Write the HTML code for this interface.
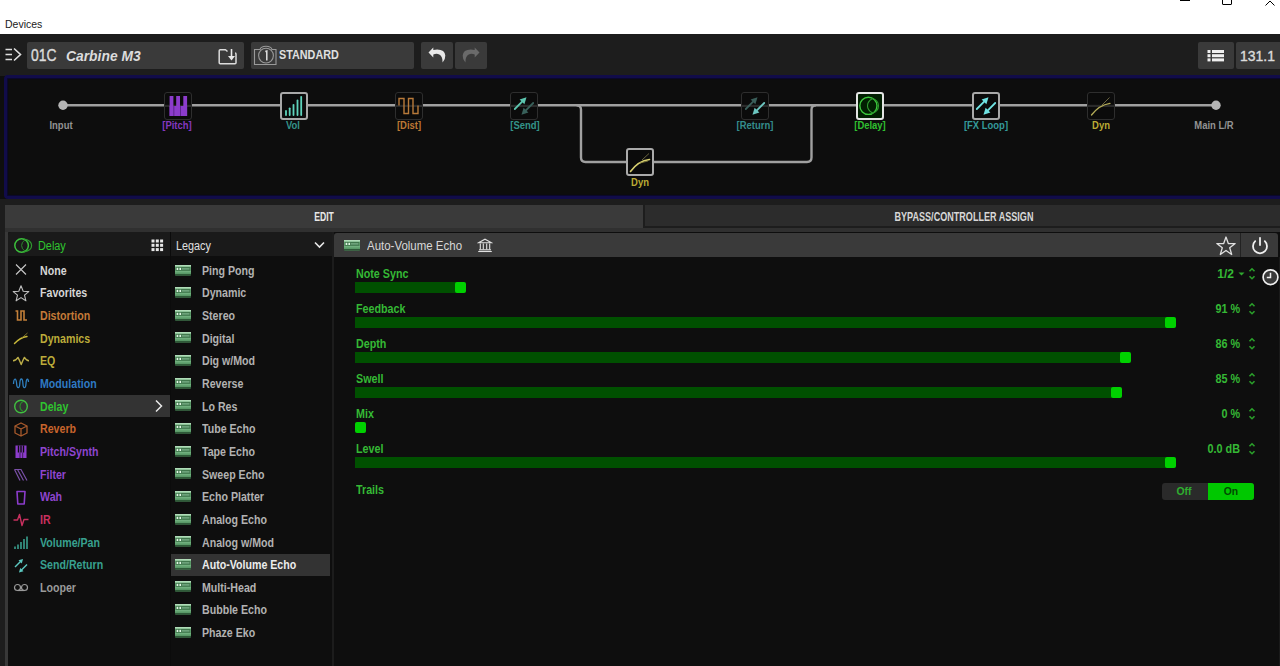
<!DOCTYPE html><html><head><meta charset="utf-8"><style>
html,body{margin:0;padding:0;}
body{width:1280px;height:666px;overflow:hidden;position:relative;background:#0e0e0e;font-family:"Liberation Sans",sans-serif;}
</style></head><body>
<div style="position:absolute;left:0px;top:0px;width:1280px;height:34px;background:#ffffff;"></div>
<div style="position:absolute;left:5px;top:19.11px;font-size:10.5px;line-height:10.5px;font-weight:normal;font-style:normal;color:#1a1a1a;white-space:nowrap;transform:scaleX(1.0);transform-origin:0 0;">Devices</div>
<div style="position:absolute;left:1180px;top:0px;width:10px;height:1px;background:#000;"></div>
<div style="position:absolute;left:1222px;top:-6px;width:8px;height:9px;border:1px solid #000;border-radius:1px;"></div>
<svg style="position:absolute;left:1262px;top:0px;" width="16" height="7" viewBox="0 0 16 7"><path d="M3.5 5.5 L8 1 L12.5 5.5" stroke="#000" stroke-width="1" fill="none"/></svg>
<div style="position:absolute;left:0px;top:34px;width:1280px;height:42px;background:#1d1d1d;"></div>
<svg style="position:absolute;left:4px;top:47px;" width="20" height="15" viewBox="0 0 20 15"><g stroke="#dedede" stroke-width="1.6" fill="none"><path d="M1.5 2.5H8M1.5 7.5H8M1.5 12.5H8"/><path d="M10 1.5L16.5 7.5L10 13.5"/></g></svg>
<div style="position:absolute;left:27px;top:42px;width:217px;height:27px;background:#3a3a3a;border-radius:2px;"></div>
<div style="position:absolute;left:30.5px;top:46.83px;font-size:16.5px;line-height:16.5px;font-weight:normal;font-style:normal;color:#dcdcdc;white-space:nowrap;transform:scaleX(0.84);transform-origin:0 0;-webkit-text-stroke:0.4px #dcdcdc;">01C</div>
<div style="position:absolute;left:66px;top:47.68px;font-size:15.5px;line-height:15.5px;font-weight:bold;font-style:italic;color:#dcdcdc;white-space:nowrap;transform:scaleX(0.894);transform-origin:0 0;">Carbine M3</div>
<div style="position:absolute;left:251px;top:42px;width:163px;height:27px;background:#3a3a3a;border-radius:2px;"></div>
<div style="position:absolute;left:278.5px;top:49.34px;font-size:12px;line-height:12px;font-weight:bold;font-style:normal;color:#e0e0e0;white-space:nowrap;transform:scaleX(0.9);transform-origin:0 0;">STANDARD</div>
<div style="position:absolute;left:421px;top:42px;width:32px;height:27px;background:#3a3a3a;border-radius:2px;"></div>
<div style="position:absolute;left:455px;top:42px;width:32px;height:27px;background:#3a3a3a;border-radius:2px;"></div>
<div style="position:absolute;left:1198px;top:42px;width:36px;height:27px;background:#3a3a3a;border-radius:2px;"></div>
<div style="position:absolute;left:1236px;top:42px;width:50px;height:27px;background:#3a3a3a;border-radius:2px;"></div>
<div style="position:absolute;left:1240px;top:47.88px;font-size:15.5px;line-height:15.5px;font-weight:normal;font-style:normal;color:#dcdcdc;white-space:nowrap;transform:scaleX(0.9);transform-origin:0 0;-webkit-text-stroke:0.4px #dcdcdc;">131.1</div>
<div style="position:absolute;left:3.5px;top:75px;width:1290px;height:124px;background:#0d0d0d;box-sizing:border-box;border:3px solid #110c4a;border-right:none;border-radius:4px 0 0 4px;box-shadow:inset 0 0 1px 1px #0a0830;"></div>
<div style="position:absolute;left:0px;top:199px;width:1280px;height:467px;background:#1d1d1d;"></div>
<div style="position:absolute;left:5px;top:205px;width:3px;height:461px;background:#383838;"></div>
<div style="position:absolute;left:5px;top:205px;width:638px;height:23px;background:#3a3a3a;"></div>
<div style="position:absolute;left:645px;top:205px;width:640px;height:21px;background:#2c2c2c;"></div>
<div style="position:absolute;left:5px;top:228px;width:1280px;height:4px;background:#303030;"></div>
<div style="position:absolute;left:-176px;width:1000px;text-align:center;top:211.14px;font-size:12px;line-height:12px;font-weight:bold;font-style:normal;color:#e8e8e8;white-space:nowrap;transform:scaleX(0.72);transform-origin:50% 0;">EDIT</div>
<div style="position:absolute;left:464px;width:1000px;text-align:center;top:210.54px;font-size:12px;line-height:12px;font-weight:bold;font-style:normal;color:#d8d8d8;white-space:nowrap;transform:scaleX(0.755);transform-origin:50% 0;">BYPASS/CONTROLLER ASSIGN</div>
<div style="position:absolute;left:8px;top:232px;width:1272px;height:434px;background:#0e0e0e;border-radius:3px 0 0 0;"></div>
<div style="position:absolute;left:170px;top:232px;width:1px;height:434px;background:#0b0b0b;"></div>
<div style="position:absolute;left:332px;top:232px;width:1.5px;height:434px;background:#1c1c1c;"></div>
<div style="position:absolute;left:8px;top:232px;width:162px;height:24px;background:#1a1a1a;border-radius:3px 0 0 0;"></div>
<div style="position:absolute;left:171px;top:232px;width:161px;height:24px;background:#1a1a1a;"></div>
<div style="position:absolute;left:334px;top:233px;width:944px;height:24px;background:#3a3a3a;border-radius:3px 3px 0 0;"></div>
<div style="position:absolute;left:1240px;top:233px;width:1px;height:24px;background:#222;"></div>
<div style="position:absolute;left:1279px;top:257px;width:1px;height:409px;background:#1a1a1a;"></div>
<div style="position:absolute;left:38.4px;top:239.54px;font-size:12px;line-height:12px;font-weight:normal;font-style:normal;color:#2fc42f;white-space:nowrap;transform:scaleX(0.906);transform-origin:0 0;">Delay</div>
<div style="position:absolute;left:175.6px;top:239.64px;font-size:12px;line-height:12px;font-weight:normal;font-style:normal;color:#e0e0e0;white-space:nowrap;transform:scaleX(0.9);transform-origin:0 0;">Legacy</div>
<div style="position:absolute;left:367px;top:239.84px;font-size:12px;line-height:12px;font-weight:normal;font-style:normal;color:#d8d8d8;white-space:nowrap;transform:scaleX(0.956);transform-origin:0 0;">Auto-Volume Echo</div>
<div style="position:absolute;left:9px;top:395px;width:161px;height:22px;background:#333333;"></div>
<div style="position:absolute;left:171px;top:553.5px;width:159px;height:22.5px;background:#333333;"></div>
<div style="position:absolute;left:40px;top:264.84px;font-size:12px;line-height:12px;font-weight:bold;font-style:normal;color:#d6d6d6;white-space:nowrap;transform:scaleX(0.885);transform-origin:0 0;">None</div>
<div style="position:absolute;left:40px;top:287.48px;font-size:12px;line-height:12px;font-weight:bold;font-style:normal;color:#d6d6d6;white-space:nowrap;transform:scaleX(0.885);transform-origin:0 0;">Favorites</div>
<div style="position:absolute;left:40px;top:310.12px;font-size:12px;line-height:12px;font-weight:bold;font-style:normal;color:#c47a38;white-space:nowrap;transform:scaleX(0.885);transform-origin:0 0;">Distortion</div>
<div style="position:absolute;left:40px;top:332.76px;font-size:12px;line-height:12px;font-weight:bold;font-style:normal;color:#bcac3a;white-space:nowrap;transform:scaleX(0.885);transform-origin:0 0;">Dynamics</div>
<div style="position:absolute;left:40px;top:355.40px;font-size:12px;line-height:12px;font-weight:bold;font-style:normal;color:#bcac3a;white-space:nowrap;transform:scaleX(0.885);transform-origin:0 0;">EQ</div>
<div style="position:absolute;left:40px;top:378.04px;font-size:12px;line-height:12px;font-weight:bold;font-style:normal;color:#2f7ac4;white-space:nowrap;transform:scaleX(0.885);transform-origin:0 0;">Modulation</div>
<div style="position:absolute;left:40px;top:400.68px;font-size:12px;line-height:12px;font-weight:bold;font-style:normal;color:#2fc42f;white-space:nowrap;transform:scaleX(0.885);transform-origin:0 0;">Delay</div>
<div style="position:absolute;left:40px;top:423.32px;font-size:12px;line-height:12px;font-weight:bold;font-style:normal;color:#c8642c;white-space:nowrap;transform:scaleX(0.885);transform-origin:0 0;">Reverb</div>
<div style="position:absolute;left:40px;top:445.96px;font-size:12px;line-height:12px;font-weight:bold;font-style:normal;color:#8f45d0;white-space:nowrap;transform:scaleX(0.885);transform-origin:0 0;">Pitch/Synth</div>
<div style="position:absolute;left:40px;top:468.60px;font-size:12px;line-height:12px;font-weight:bold;font-style:normal;color:#8f45d0;white-space:nowrap;transform:scaleX(0.885);transform-origin:0 0;">Filter</div>
<div style="position:absolute;left:40px;top:491.24px;font-size:12px;line-height:12px;font-weight:bold;font-style:normal;color:#8f45d0;white-space:nowrap;transform:scaleX(0.885);transform-origin:0 0;">Wah</div>
<div style="position:absolute;left:40px;top:513.88px;font-size:12px;line-height:12px;font-weight:bold;font-style:normal;color:#c8305f;white-space:nowrap;transform:scaleX(0.885);transform-origin:0 0;">IR</div>
<div style="position:absolute;left:40px;top:536.52px;font-size:12px;line-height:12px;font-weight:bold;font-style:normal;color:#38a08f;white-space:nowrap;transform:scaleX(0.885);transform-origin:0 0;">Volume/Pan</div>
<div style="position:absolute;left:40px;top:559.16px;font-size:12px;line-height:12px;font-weight:bold;font-style:normal;color:#38a08f;white-space:nowrap;transform:scaleX(0.885);transform-origin:0 0;">Send/Return</div>
<div style="position:absolute;left:40px;top:581.80px;font-size:12px;line-height:12px;font-weight:bold;font-style:normal;color:#9a9a9a;white-space:nowrap;transform:scaleX(0.885);transform-origin:0 0;">Looper</div>
<div style="position:absolute;left:201.6px;top:264.84px;font-size:12px;line-height:12px;font-weight:bold;font-style:normal;color:#b2b2b2;white-space:nowrap;transform:scaleX(0.885);transform-origin:0 0;">Ping Pong</div>
<div style="position:absolute;left:201.6px;top:287.48px;font-size:12px;line-height:12px;font-weight:bold;font-style:normal;color:#b2b2b2;white-space:nowrap;transform:scaleX(0.885);transform-origin:0 0;">Dynamic</div>
<div style="position:absolute;left:201.6px;top:310.12px;font-size:12px;line-height:12px;font-weight:bold;font-style:normal;color:#b2b2b2;white-space:nowrap;transform:scaleX(0.885);transform-origin:0 0;">Stereo</div>
<div style="position:absolute;left:201.6px;top:332.76px;font-size:12px;line-height:12px;font-weight:bold;font-style:normal;color:#b2b2b2;white-space:nowrap;transform:scaleX(0.885);transform-origin:0 0;">Digital</div>
<div style="position:absolute;left:201.6px;top:355.40px;font-size:12px;line-height:12px;font-weight:bold;font-style:normal;color:#b2b2b2;white-space:nowrap;transform:scaleX(0.885);transform-origin:0 0;">Dig w/Mod</div>
<div style="position:absolute;left:201.6px;top:378.04px;font-size:12px;line-height:12px;font-weight:bold;font-style:normal;color:#b2b2b2;white-space:nowrap;transform:scaleX(0.885);transform-origin:0 0;">Reverse</div>
<div style="position:absolute;left:201.6px;top:400.68px;font-size:12px;line-height:12px;font-weight:bold;font-style:normal;color:#b2b2b2;white-space:nowrap;transform:scaleX(0.885);transform-origin:0 0;">Lo Res</div>
<div style="position:absolute;left:201.6px;top:423.32px;font-size:12px;line-height:12px;font-weight:bold;font-style:normal;color:#b2b2b2;white-space:nowrap;transform:scaleX(0.885);transform-origin:0 0;">Tube Echo</div>
<div style="position:absolute;left:201.6px;top:445.96px;font-size:12px;line-height:12px;font-weight:bold;font-style:normal;color:#b2b2b2;white-space:nowrap;transform:scaleX(0.885);transform-origin:0 0;">Tape Echo</div>
<div style="position:absolute;left:201.6px;top:468.60px;font-size:12px;line-height:12px;font-weight:bold;font-style:normal;color:#b2b2b2;white-space:nowrap;transform:scaleX(0.885);transform-origin:0 0;">Sweep Echo</div>
<div style="position:absolute;left:201.6px;top:491.24px;font-size:12px;line-height:12px;font-weight:bold;font-style:normal;color:#b2b2b2;white-space:nowrap;transform:scaleX(0.885);transform-origin:0 0;">Echo Platter</div>
<div style="position:absolute;left:201.6px;top:513.88px;font-size:12px;line-height:12px;font-weight:bold;font-style:normal;color:#b2b2b2;white-space:nowrap;transform:scaleX(0.885);transform-origin:0 0;">Analog Echo</div>
<div style="position:absolute;left:201.6px;top:536.52px;font-size:12px;line-height:12px;font-weight:bold;font-style:normal;color:#b2b2b2;white-space:nowrap;transform:scaleX(0.885);transform-origin:0 0;">Analog w/Mod</div>
<div style="position:absolute;left:201.6px;top:559.16px;font-size:12px;line-height:12px;font-weight:bold;font-style:normal;color:#ececec;white-space:nowrap;transform:scaleX(0.885);transform-origin:0 0;">Auto-Volume Echo</div>
<div style="position:absolute;left:201.6px;top:581.80px;font-size:12px;line-height:12px;font-weight:bold;font-style:normal;color:#b2b2b2;white-space:nowrap;transform:scaleX(0.885);transform-origin:0 0;">Multi-Head</div>
<div style="position:absolute;left:201.6px;top:604.44px;font-size:12px;line-height:12px;font-weight:bold;font-style:normal;color:#b2b2b2;white-space:nowrap;transform:scaleX(0.885);transform-origin:0 0;">Bubble Echo</div>
<div style="position:absolute;left:201.6px;top:627.08px;font-size:12px;line-height:12px;font-weight:bold;font-style:normal;color:#b2b2b2;white-space:nowrap;transform:scaleX(0.885);transform-origin:0 0;">Phaze Eko</div>
<div style="position:absolute;left:355.5px;top:267.84px;font-size:12px;line-height:12px;font-weight:bold;font-style:normal;color:#35b935;white-space:nowrap;transform:scaleX(0.894);transform-origin:0 0;">Note Sync</div>
<div style="position:absolute;left:355px;top:282px;width:105px;height:11px;background:#005000;"></div>
<div style="position:absolute;left:455px;top:282px;width:11px;height:11px;background:#00d000;border-radius:2px;"></div>
<div style="position:absolute;left:234px;width:1000px;text-align:right;top:267.84px;font-size:12px;line-height:12px;font-weight:bold;font-style:normal;color:#35b935;white-space:nowrap;transform:scaleX(1.0);transform-origin:100% 0;">1/2</div>
<div style="position:absolute;left:355.5px;top:302.84px;font-size:12px;line-height:12px;font-weight:bold;font-style:normal;color:#35b935;white-space:nowrap;transform:scaleX(0.894);transform-origin:0 0;">Feedback</div>
<div style="position:absolute;left:355px;top:317px;width:815px;height:11px;background:#005000;"></div>
<div style="position:absolute;left:1165px;top:317px;width:11px;height:11px;background:#00d000;border-radius:2px;"></div>
<div style="position:absolute;left:240px;width:1000px;text-align:right;top:302.84px;font-size:12px;line-height:12px;font-weight:bold;font-style:normal;color:#35b935;white-space:nowrap;transform:scaleX(0.9);transform-origin:100% 0;">91 %</div>
<div style="position:absolute;left:355.5px;top:337.84px;font-size:12px;line-height:12px;font-weight:bold;font-style:normal;color:#35b935;white-space:nowrap;transform:scaleX(0.894);transform-origin:0 0;">Depth</div>
<div style="position:absolute;left:355px;top:352px;width:770px;height:11px;background:#005000;"></div>
<div style="position:absolute;left:1120px;top:352px;width:11px;height:11px;background:#00d000;border-radius:2px;"></div>
<div style="position:absolute;left:240px;width:1000px;text-align:right;top:337.84px;font-size:12px;line-height:12px;font-weight:bold;font-style:normal;color:#35b935;white-space:nowrap;transform:scaleX(0.9);transform-origin:100% 0;">86 %</div>
<div style="position:absolute;left:355.5px;top:372.84px;font-size:12px;line-height:12px;font-weight:bold;font-style:normal;color:#35b935;white-space:nowrap;transform:scaleX(0.894);transform-origin:0 0;">Swell</div>
<div style="position:absolute;left:355px;top:387px;width:761px;height:11px;background:#005000;"></div>
<div style="position:absolute;left:1111px;top:387px;width:11px;height:11px;background:#00d000;border-radius:2px;"></div>
<div style="position:absolute;left:240px;width:1000px;text-align:right;top:372.84px;font-size:12px;line-height:12px;font-weight:bold;font-style:normal;color:#35b935;white-space:nowrap;transform:scaleX(0.9);transform-origin:100% 0;">85 %</div>
<div style="position:absolute;left:355.5px;top:407.84px;font-size:12px;line-height:12px;font-weight:bold;font-style:normal;color:#35b935;white-space:nowrap;transform:scaleX(0.894);transform-origin:0 0;">Mix</div>
<div style="position:absolute;left:355px;top:422px;width:11px;height:11px;background:#00d000;border-radius:2px;"></div>
<div style="position:absolute;left:240px;width:1000px;text-align:right;top:407.84px;font-size:12px;line-height:12px;font-weight:bold;font-style:normal;color:#35b935;white-space:nowrap;transform:scaleX(0.9);transform-origin:100% 0;">0 %</div>
<div style="position:absolute;left:355.5px;top:442.84px;font-size:12px;line-height:12px;font-weight:bold;font-style:normal;color:#35b935;white-space:nowrap;transform:scaleX(0.894);transform-origin:0 0;">Level</div>
<div style="position:absolute;left:355px;top:457px;width:815px;height:11px;background:#005000;"></div>
<div style="position:absolute;left:1165px;top:457px;width:11px;height:11px;background:#00d000;border-radius:2px;"></div>
<div style="position:absolute;left:240px;width:1000px;text-align:right;top:442.84px;font-size:12px;line-height:12px;font-weight:bold;font-style:normal;color:#35b935;white-space:nowrap;transform:scaleX(0.9);transform-origin:100% 0;">0.0 dB</div>
<div style="position:absolute;left:355.5px;top:484.24px;font-size:12px;line-height:12px;font-weight:bold;font-style:normal;color:#35b935;white-space:nowrap;transform:scaleX(0.894);transform-origin:0 0;">Trails</div>
<div style="position:absolute;left:1162px;top:482.5px;width:92px;height:17px;background:#2a2a2a;border-radius:3px;"></div>
<div style="position:absolute;left:1207.5px;top:482.5px;width:46.5px;height:17px;background:#00c800;border-radius:0 3px 3px 0;"></div>
<div style="position:absolute;left:684px;width:1000px;text-align:center;top:485.77px;font-size:11.5px;line-height:11.5px;font-weight:bold;font-style:normal;color:#2fb02f;white-space:nowrap;transform:scaleX(0.9);transform-origin:50% 0;">Off</div>
<div style="position:absolute;left:730.5px;width:1000px;text-align:center;top:485.77px;font-size:11.5px;line-height:11.5px;font-weight:bold;font-style:normal;color:#004a00;white-space:nowrap;transform:scaleX(0.9);transform-origin:50% 0;">On</div>
<svg style="position:absolute;left:217px;top:47px;" width="22" height="19" viewBox="0 0 22 19"><g fill="none" stroke="#dcdcdc" stroke-width="1.5" stroke-linejoin="round"><path d="M10.5 4.5 L8.5 2.8 H3.2 Q2.2 2.8 2.2 3.8 V15.8 Q2.2 16.8 3.2 16.8 H18 Q19 16.8 19 15.8 V7 Q19 6 18 6"/></g><path d="M14.5 2 V10" stroke="#e8e8e8" stroke-width="1.6"/><path d="M11 9 H18 L14.5 13.5 Z" fill="#e8e8e8"/></svg>
<svg style="position:absolute;left:252px;top:44px;" width="26" height="23" viewBox="0 0 26 23"><g fill="none" stroke="#9a9a9a" stroke-width="1.1"><path d="M2.5 5.5 H8 Q9 2.3 14 2.3 Q19 2.3 20 5.5 H24 V20.5 H2.5 Z"/><circle cx="14" cy="11.6" r="7.4"/></g><path d="M13.3 7.5 L14.8 7 V16.5" stroke="#e0e0e0" stroke-width="1.5" fill="none"/></svg>
<svg style="position:absolute;left:425px;top:45px;" width="24" height="20" viewBox="0 0 24 20"><path d="M3.5 7.6 L8.3 2.6 L8.3 4.9 Q19.8 3.2 20.3 10.6 Q20.5 14.6 17.6 17.6 Q18 10.4 13 8.9 Q10.6 8.3 8.3 9.6 L8.3 12.5 Z" fill="#e8e8e8"/></svg>
<svg style="position:absolute;left:459px;top:45px;" width="24" height="20" viewBox="0 0 24 20"><path d="M20.5 7.6 L15.7 2.6 L15.7 4.9 Q4.2 3.2 3.7 10.6 Q3.5 14.6 6.4 17.6 Q6 10.4 11 8.9 Q13.4 8.3 15.7 9.6 L15.7 12.5 Z" fill="#6a6a6a"/></svg>
<svg style="position:absolute;left:1206px;top:49px;" width="20" height="14" viewBox="0 0 20 14"><g fill="#f0f0f0"><rect x="1.5" y="1" width="3" height="3"/><rect x="6" y="1" width="12" height="3"/><rect x="1.5" y="5.2" width="3" height="3"/><rect x="6" y="5.2" width="12" height="3"/><rect x="1.5" y="9.4" width="3" height="3"/><rect x="6" y="9.4" width="12" height="3"/></g></svg>
<svg style="position:absolute;left:0px;top:76px;" width="1280" height="122" viewBox="0 0 1280 122"><g fill="none" stroke="#a0a0a0" stroke-width="2.4"><path d="M63 29.3 H1216"/><path d="M576.5 29.3 Q581 29.3 581 33.8 V81.5 Q581 86 585.5 86 H807 Q811.5 86 811.5 81.5 V33.8 Q811.5 29.3 816 29.3"/></g><circle cx="63" cy="29.3" r="4.7" fill="#b4b4b4"/><circle cx="1216" cy="29.3" r="4.7" fill="#b4b4b4"/></svg>
<div style="position:absolute;left:164px;top:91.5px;width:28px;height:28px;box-sizing:border-box;border:1.5px solid #2e2e2e;border-radius:3px;background:#0b0b0b;"></div>
<svg style="position:absolute;left:164px;top:91.5px;" width="28" height="28" viewBox="0 0 28 28"><rect x="0" y="12.8" width="28" height="2.2" fill="#2a2a2a"/><g fill="#8c3ccc"><rect x="5.6" y="4" width="3.8" height="20"/><rect x="12.2" y="4" width="3.8" height="20"/><rect x="19.3" y="4" width="3.8" height="20"/><rect x="5.6" y="14" width="17.5" height="10"/></g><g fill="#5a2288"><rect x="9.4" y="14" width="0.9" height="10"/><rect x="16" y="14" width="0.9" height="10"/></g></svg>
<div style="position:absolute;left:279.7px;top:91.5px;width:28px;height:28px;box-sizing:border-box;border:2px solid #a8a8a8;border-radius:3px;background:#0b0b0b;"></div>
<svg style="position:absolute;left:279.7px;top:91.5px;" width="28" height="28" viewBox="0 0 28 28"><g stroke="#5fd4bc" stroke-width="1.8" stroke-linecap="round"><path d="M6 23 V19"/><path d="M9.7 23 V16.3"/><path d="M13.5 23 V12.8"/><path d="M17.5 23 V8.5"/><path d="M21.2 23 V4.8"/></g></svg>
<div style="position:absolute;left:395px;top:91.5px;width:28px;height:28px;box-sizing:border-box;border:1.5px solid #2e2e2e;border-radius:3px;background:#0b0b0b;"></div>
<svg style="position:absolute;left:395px;top:91.5px;" width="28" height="28" viewBox="0 0 28 28"><rect x="0" y="12.8" width="28" height="2.2" fill="#2a2a2a"/><path d="M4 13.5 V6.5 H9 V21.5 H13.5 V6.5 H18 V21.5 H23 V13.5" fill="none" stroke="#b87a3a" stroke-width="1.4"/></svg>
<div style="position:absolute;left:510.4px;top:91.5px;width:28px;height:28px;box-sizing:border-box;border:1.5px solid #2e2e2e;border-radius:3px;background:#0b0b0b;"></div>
<svg style="position:absolute;left:510.4px;top:91.5px;" width="28" height="28" viewBox="0 0 28 28"><rect x="0" y="12.8" width="28" height="2.2" fill="#2a2a2a"/><path d="M4.8 17 L12.6 9.2" stroke="#5cc4ae" stroke-width="1.8" stroke-linecap="round"/><path d="M16.5 5.3 L9.6 7.4 L14.4 12.2 Z" fill="#5cc4ae"/><path d="M23.2 11 L15.4 18.8" stroke="#38605a" stroke-width="1.8" stroke-linecap="round"/><path d="M11.5 22.7 L18.4 20.6 L13.6 15.8 Z" fill="#38605a"/></svg>
<div style="position:absolute;left:625.7px;top:148px;width:28px;height:28px;box-sizing:border-box;border:2px solid #aaaaaa;border-radius:3px;background:#0b0b0b;"></div>
<svg style="position:absolute;left:625.7px;top:148px;" width="28" height="28" viewBox="0 0 28 28"><path d="M4.5 23.5 Q12 13 23.5 11.5" fill="none" stroke="#d8d070" stroke-width="1.6" stroke-linecap="round"/><path d="M16 12 L23 5.5" stroke="#6a6440" stroke-width="1"/><path d="M14 15 L22 13" stroke="#8a8440" stroke-width="0.8"/></svg>
<div style="position:absolute;left:741px;top:91.5px;width:28px;height:28px;box-sizing:border-box;border:1.5px solid #2e2e2e;border-radius:3px;background:#0b0b0b;"></div>
<svg style="position:absolute;left:741px;top:91.5px;" width="28" height="28" viewBox="0 0 28 28"><rect x="0" y="12.8" width="28" height="2.2" fill="#2a2a2a"/><path d="M4.8 17 L12.6 9.2" stroke="#3a5e5a" stroke-width="1.8" stroke-linecap="round"/><path d="M16.5 5.3 L9.6 7.4 L14.4 12.2 Z" fill="#3a5e5a"/><path d="M23.2 11 L15.4 18.8" stroke="#6cc6c0" stroke-width="1.8" stroke-linecap="round"/><path d="M11.5 22.7 L18.4 20.6 L13.6 15.8 Z" fill="#6cc6c0"/></svg>
<div style="position:absolute;left:856.2px;top:91.5px;width:28px;height:28px;box-sizing:border-box;border:2px solid #e4e4e4;border-radius:3px;background:#021f02;"></div>
<svg style="position:absolute;left:856.2px;top:91.5px;" width="28" height="28" viewBox="0 0 28 28"><circle cx="12.4" cy="13.8" r="8.6" fill="none" stroke="#3cc83c" stroke-width="1.4"/><path d="M15.6 6.2 Q22.5 8 22.5 13.8 Q22.5 19.6 15.6 21.4" fill="none" stroke="#2f9a2f" stroke-width="1.1"/><path d="M16.2 6.8 Q11.5 9.5 11.5 13.8 Q11.5 18.1 16.2 20.8" fill="none" stroke="#2f9a2f" stroke-width="1.1"/></svg>
<div style="position:absolute;left:972px;top:91.5px;width:28px;height:28px;box-sizing:border-box;border:2px solid #a8a8a8;border-radius:3px;background:#0b0b0b;"></div>
<svg style="position:absolute;left:972px;top:91.5px;" width="28" height="28" viewBox="0 0 28 28"><path d="M4.8 17 L12.6 9.2" stroke="#70e2e2" stroke-width="1.8" stroke-linecap="round"/><path d="M16.5 5.3 L9.6 7.4 L14.4 12.2 Z" fill="#70e2e2"/><path d="M23.2 11 L15.4 18.8" stroke="#70e2e2" stroke-width="1.8" stroke-linecap="round"/><path d="M11.5 22.7 L18.4 20.6 L13.6 15.8 Z" fill="#70e2e2"/></svg>
<div style="position:absolute;left:1087px;top:91.5px;width:28px;height:28px;box-sizing:border-box;border:1.5px solid #2e2e2e;border-radius:3px;background:#0b0b0b;"></div>
<svg style="position:absolute;left:1087px;top:91.5px;" width="28" height="28" viewBox="0 0 28 28"><rect x="0" y="12.8" width="28" height="2.2" fill="#2a2a2a"/><path d="M4.5 23 Q12 13 23 11.3" fill="none" stroke="#b4ac58" stroke-width="1.3" stroke-linecap="round"/><path d="M15 13 L22.5 5.5" stroke="#6a6440" stroke-width="1"/></svg>
<div style="position:absolute;left:-439.3px;width:1000px;text-align:center;top:119.91px;font-size:10.5px;line-height:10.5px;font-weight:bold;font-style:normal;color:#939393;white-space:nowrap;transform:scaleX(0.9);transform-origin:50% 0;">Input</div>
<div style="position:absolute;left:-323px;width:1000px;text-align:center;top:119.91px;font-size:10.5px;line-height:10.5px;font-weight:bold;font-style:normal;color:#8438c0;white-space:nowrap;transform:scaleX(0.9);transform-origin:50% 0;">[Pitch]</div>
<div style="position:absolute;left:-206.8px;width:1000px;text-align:center;top:119.91px;font-size:10.5px;line-height:10.5px;font-weight:bold;font-style:normal;color:#34948a;white-space:nowrap;transform:scaleX(0.9);transform-origin:50% 0;">Vol</div>
<div style="position:absolute;left:-91px;width:1000px;text-align:center;top:119.91px;font-size:10.5px;line-height:10.5px;font-weight:bold;font-style:normal;color:#bc7834;white-space:nowrap;transform:scaleX(0.9);transform-origin:50% 0;">[Dist]</div>
<div style="position:absolute;left:24.5px;width:1000px;text-align:center;top:119.91px;font-size:10.5px;line-height:10.5px;font-weight:bold;font-style:normal;color:#34948a;white-space:nowrap;transform:scaleX(0.9);transform-origin:50% 0;">[Send]</div>
<div style="position:absolute;left:255px;width:1000px;text-align:center;top:119.91px;font-size:10.5px;line-height:10.5px;font-weight:bold;font-style:normal;color:#348c8c;white-space:nowrap;transform:scaleX(0.9);transform-origin:50% 0;">[Return]</div>
<div style="position:absolute;left:370px;width:1000px;text-align:center;top:119.91px;font-size:10.5px;line-height:10.5px;font-weight:bold;font-style:normal;color:#30c030;white-space:nowrap;transform:scaleX(0.9);transform-origin:50% 0;">[Delay]</div>
<div style="position:absolute;left:486px;width:1000px;text-align:center;top:119.91px;font-size:10.5px;line-height:10.5px;font-weight:bold;font-style:normal;color:#349a9a;white-space:nowrap;transform:scaleX(0.9);transform-origin:50% 0;">[FX Loop]</div>
<div style="position:absolute;left:601px;width:1000px;text-align:center;top:119.91px;font-size:10.5px;line-height:10.5px;font-weight:bold;font-style:normal;color:#bcac34;white-space:nowrap;transform:scaleX(0.9);transform-origin:50% 0;">Dyn</div>
<div style="position:absolute;left:714.2px;width:1000px;text-align:center;top:119.91px;font-size:10.5px;line-height:10.5px;font-weight:bold;font-style:normal;color:#939393;white-space:nowrap;transform:scaleX(0.9);transform-origin:50% 0;">Main L/R</div>
<div style="position:absolute;left:139.5px;width:1000px;text-align:center;top:176.71px;font-size:10.5px;line-height:10.5px;font-weight:bold;font-style:normal;color:#bcac34;white-space:nowrap;transform:scaleX(0.9);transform-origin:50% 0;">Dyn</div>
<svg style="position:absolute;left:13px;top:236px;" width="20" height="19" viewBox="0 0 20 19"><circle cx="8.6" cy="9.5" r="6.8" fill="none" stroke="#3cc03c" stroke-width="1.5"/><path d="M11.2 3.2 Q18.6 4.6 18.6 9.5 Q18.6 14.4 11.2 15.8" fill="none" stroke="#2f9a2f" stroke-width="1.2"/><path d="M12 3.8 Q8.6 6 8.6 9.5 Q8.6 13 12 15.2" fill="none" stroke="#2a8a2a" stroke-width="1"/></svg>
<svg style="position:absolute;left:151px;top:239px;" width="13" height="13" viewBox="0 0 13 13"><g fill="#e8e8e8"><rect x="0.5" y="0.5" width="3" height="3"/><rect x="4.8" y="0.5" width="3" height="3"/><rect x="9.1" y="0.5" width="3" height="3"/><rect x="0.5" y="4.8" width="3" height="3"/><rect x="4.8" y="4.8" width="3" height="3"/><rect x="9.1" y="4.8" width="3" height="3"/><rect x="0.5" y="9.1" width="3" height="3"/><rect x="4.8" y="9.1" width="3" height="3"/><rect x="9.1" y="9.1" width="3" height="3"/></g></svg>
<svg style="position:absolute;left:313px;top:240px;" width="13" height="10" viewBox="0 0 13 10"><path d="M2 2.5 L6.5 7 L11 2.5" fill="none" stroke="#e8e8e8" stroke-width="1.6"/></svg>
<svg style="position:absolute;left:477px;top:238px;" width="16" height="15" viewBox="0 0 16 15"><g fill="none" stroke="#e0e0e0" stroke-width="1.1"><path d="M1.5 4.8 L8 1.2 L14.5 4.8 Z"/><path d="M1.2 13.5 H14.8"/><path d="M2 11.8 H14"/><path d="M3.3 5.5 V11.5M6.3 5.5 V11.5M9.7 5.5 V11.5M12.7 5.5 V11.5"/></g></svg>
<svg style="position:absolute;left:1215px;top:235px;" width="22" height="22" viewBox="0 0 22 22"><path d="M11 2 L13.3 8.5 L20.2 8.6 L14.7 12.8 L16.7 19.5 L11 15.5 L5.3 19.5 L7.3 12.8 L1.8 8.6 L8.7 8.5 Z" fill="none" stroke="#e0e0e0" stroke-width="1.3" stroke-linejoin="round"/></svg>
<svg style="position:absolute;left:1250px;top:236px;" width="20" height="20" viewBox="0 0 20 20"><path d="M5.2 5.2 A7 7 0 1 0 14.8 5.2" fill="none" stroke="#f0f0f0" stroke-width="1.8" stroke-linecap="round"/><path d="M10 1.8 V9" stroke="#f0f0f0" stroke-width="1.8" stroke-linecap="round"/></svg>
<svg style="position:absolute;left:175px;top:264.5px;" width="16" height="11" viewBox="0 0 16 11"><rect x="0" y="0" width="16" height="10.5" rx="1" fill="#5a9a68"/><rect x="0" y="0" width="16" height="1.6" fill="#b0dcb8"/><rect x="1" y="2.2" width="14" height="3.4" fill="#3c7048"/><rect x="1.6" y="2.8" width="1.7" height="2.2" fill="#e0f8e4"/><rect x="4.4" y="2.8" width="1.7" height="2.2" fill="#e0f8e4"/><rect x="7" y="3.3" width="7.5" height="1.2" fill="#80b890"/><rect x="0" y="6.3" width="16" height="1" fill="#7ab888"/><rect x="0" y="9" width="16" height="1.5" fill="#2e5a38"/></svg>
<svg style="position:absolute;left:175px;top:287.14px;" width="16" height="11" viewBox="0 0 16 11"><rect x="0" y="0" width="16" height="10.5" rx="1" fill="#5a9a68"/><rect x="0" y="0" width="16" height="1.6" fill="#b0dcb8"/><rect x="1" y="2.2" width="14" height="3.4" fill="#3c7048"/><rect x="1.6" y="2.8" width="1.7" height="2.2" fill="#e0f8e4"/><rect x="4.4" y="2.8" width="1.7" height="2.2" fill="#e0f8e4"/><rect x="7" y="3.3" width="7.5" height="1.2" fill="#80b890"/><rect x="0" y="6.3" width="16" height="1" fill="#7ab888"/><rect x="0" y="9" width="16" height="1.5" fill="#2e5a38"/></svg>
<svg style="position:absolute;left:175px;top:309.78000000000003px;" width="16" height="11" viewBox="0 0 16 11"><rect x="0" y="0" width="16" height="10.5" rx="1" fill="#5a9a68"/><rect x="0" y="0" width="16" height="1.6" fill="#b0dcb8"/><rect x="1" y="2.2" width="14" height="3.4" fill="#3c7048"/><rect x="1.6" y="2.8" width="1.7" height="2.2" fill="#e0f8e4"/><rect x="4.4" y="2.8" width="1.7" height="2.2" fill="#e0f8e4"/><rect x="7" y="3.3" width="7.5" height="1.2" fill="#80b890"/><rect x="0" y="6.3" width="16" height="1" fill="#7ab888"/><rect x="0" y="9" width="16" height="1.5" fill="#2e5a38"/></svg>
<svg style="position:absolute;left:175px;top:332.42px;" width="16" height="11" viewBox="0 0 16 11"><rect x="0" y="0" width="16" height="10.5" rx="1" fill="#5a9a68"/><rect x="0" y="0" width="16" height="1.6" fill="#b0dcb8"/><rect x="1" y="2.2" width="14" height="3.4" fill="#3c7048"/><rect x="1.6" y="2.8" width="1.7" height="2.2" fill="#e0f8e4"/><rect x="4.4" y="2.8" width="1.7" height="2.2" fill="#e0f8e4"/><rect x="7" y="3.3" width="7.5" height="1.2" fill="#80b890"/><rect x="0" y="6.3" width="16" height="1" fill="#7ab888"/><rect x="0" y="9" width="16" height="1.5" fill="#2e5a38"/></svg>
<svg style="position:absolute;left:175px;top:355.06px;" width="16" height="11" viewBox="0 0 16 11"><rect x="0" y="0" width="16" height="10.5" rx="1" fill="#5a9a68"/><rect x="0" y="0" width="16" height="1.6" fill="#b0dcb8"/><rect x="1" y="2.2" width="14" height="3.4" fill="#3c7048"/><rect x="1.6" y="2.8" width="1.7" height="2.2" fill="#e0f8e4"/><rect x="4.4" y="2.8" width="1.7" height="2.2" fill="#e0f8e4"/><rect x="7" y="3.3" width="7.5" height="1.2" fill="#80b890"/><rect x="0" y="6.3" width="16" height="1" fill="#7ab888"/><rect x="0" y="9" width="16" height="1.5" fill="#2e5a38"/></svg>
<svg style="position:absolute;left:175px;top:377.7px;" width="16" height="11" viewBox="0 0 16 11"><rect x="0" y="0" width="16" height="10.5" rx="1" fill="#5a9a68"/><rect x="0" y="0" width="16" height="1.6" fill="#b0dcb8"/><rect x="1" y="2.2" width="14" height="3.4" fill="#3c7048"/><rect x="1.6" y="2.8" width="1.7" height="2.2" fill="#e0f8e4"/><rect x="4.4" y="2.8" width="1.7" height="2.2" fill="#e0f8e4"/><rect x="7" y="3.3" width="7.5" height="1.2" fill="#80b890"/><rect x="0" y="6.3" width="16" height="1" fill="#7ab888"/><rect x="0" y="9" width="16" height="1.5" fill="#2e5a38"/></svg>
<svg style="position:absolute;left:175px;top:400.34px;" width="16" height="11" viewBox="0 0 16 11"><rect x="0" y="0" width="16" height="10.5" rx="1" fill="#5a9a68"/><rect x="0" y="0" width="16" height="1.6" fill="#b0dcb8"/><rect x="1" y="2.2" width="14" height="3.4" fill="#3c7048"/><rect x="1.6" y="2.8" width="1.7" height="2.2" fill="#e0f8e4"/><rect x="4.4" y="2.8" width="1.7" height="2.2" fill="#e0f8e4"/><rect x="7" y="3.3" width="7.5" height="1.2" fill="#80b890"/><rect x="0" y="6.3" width="16" height="1" fill="#7ab888"/><rect x="0" y="9" width="16" height="1.5" fill="#2e5a38"/></svg>
<svg style="position:absolute;left:175px;top:422.98px;" width="16" height="11" viewBox="0 0 16 11"><rect x="0" y="0" width="16" height="10.5" rx="1" fill="#5a9a68"/><rect x="0" y="0" width="16" height="1.6" fill="#b0dcb8"/><rect x="1" y="2.2" width="14" height="3.4" fill="#3c7048"/><rect x="1.6" y="2.8" width="1.7" height="2.2" fill="#e0f8e4"/><rect x="4.4" y="2.8" width="1.7" height="2.2" fill="#e0f8e4"/><rect x="7" y="3.3" width="7.5" height="1.2" fill="#80b890"/><rect x="0" y="6.3" width="16" height="1" fill="#7ab888"/><rect x="0" y="9" width="16" height="1.5" fill="#2e5a38"/></svg>
<svg style="position:absolute;left:175px;top:445.62px;" width="16" height="11" viewBox="0 0 16 11"><rect x="0" y="0" width="16" height="10.5" rx="1" fill="#5a9a68"/><rect x="0" y="0" width="16" height="1.6" fill="#b0dcb8"/><rect x="1" y="2.2" width="14" height="3.4" fill="#3c7048"/><rect x="1.6" y="2.8" width="1.7" height="2.2" fill="#e0f8e4"/><rect x="4.4" y="2.8" width="1.7" height="2.2" fill="#e0f8e4"/><rect x="7" y="3.3" width="7.5" height="1.2" fill="#80b890"/><rect x="0" y="6.3" width="16" height="1" fill="#7ab888"/><rect x="0" y="9" width="16" height="1.5" fill="#2e5a38"/></svg>
<svg style="position:absolute;left:175px;top:468.26px;" width="16" height="11" viewBox="0 0 16 11"><rect x="0" y="0" width="16" height="10.5" rx="1" fill="#5a9a68"/><rect x="0" y="0" width="16" height="1.6" fill="#b0dcb8"/><rect x="1" y="2.2" width="14" height="3.4" fill="#3c7048"/><rect x="1.6" y="2.8" width="1.7" height="2.2" fill="#e0f8e4"/><rect x="4.4" y="2.8" width="1.7" height="2.2" fill="#e0f8e4"/><rect x="7" y="3.3" width="7.5" height="1.2" fill="#80b890"/><rect x="0" y="6.3" width="16" height="1" fill="#7ab888"/><rect x="0" y="9" width="16" height="1.5" fill="#2e5a38"/></svg>
<svg style="position:absolute;left:175px;top:490.90000000000003px;" width="16" height="11" viewBox="0 0 16 11"><rect x="0" y="0" width="16" height="10.5" rx="1" fill="#5a9a68"/><rect x="0" y="0" width="16" height="1.6" fill="#b0dcb8"/><rect x="1" y="2.2" width="14" height="3.4" fill="#3c7048"/><rect x="1.6" y="2.8" width="1.7" height="2.2" fill="#e0f8e4"/><rect x="4.4" y="2.8" width="1.7" height="2.2" fill="#e0f8e4"/><rect x="7" y="3.3" width="7.5" height="1.2" fill="#80b890"/><rect x="0" y="6.3" width="16" height="1" fill="#7ab888"/><rect x="0" y="9" width="16" height="1.5" fill="#2e5a38"/></svg>
<svg style="position:absolute;left:175px;top:513.54px;" width="16" height="11" viewBox="0 0 16 11"><rect x="0" y="0" width="16" height="10.5" rx="1" fill="#5a9a68"/><rect x="0" y="0" width="16" height="1.6" fill="#b0dcb8"/><rect x="1" y="2.2" width="14" height="3.4" fill="#3c7048"/><rect x="1.6" y="2.8" width="1.7" height="2.2" fill="#e0f8e4"/><rect x="4.4" y="2.8" width="1.7" height="2.2" fill="#e0f8e4"/><rect x="7" y="3.3" width="7.5" height="1.2" fill="#80b890"/><rect x="0" y="6.3" width="16" height="1" fill="#7ab888"/><rect x="0" y="9" width="16" height="1.5" fill="#2e5a38"/></svg>
<svg style="position:absolute;left:175px;top:536.18px;" width="16" height="11" viewBox="0 0 16 11"><rect x="0" y="0" width="16" height="10.5" rx="1" fill="#5a9a68"/><rect x="0" y="0" width="16" height="1.6" fill="#b0dcb8"/><rect x="1" y="2.2" width="14" height="3.4" fill="#3c7048"/><rect x="1.6" y="2.8" width="1.7" height="2.2" fill="#e0f8e4"/><rect x="4.4" y="2.8" width="1.7" height="2.2" fill="#e0f8e4"/><rect x="7" y="3.3" width="7.5" height="1.2" fill="#80b890"/><rect x="0" y="6.3" width="16" height="1" fill="#7ab888"/><rect x="0" y="9" width="16" height="1.5" fill="#2e5a38"/></svg>
<svg style="position:absolute;left:175px;top:558.8199999999999px;" width="16" height="11" viewBox="0 0 16 11"><rect x="0" y="0" width="16" height="10.5" rx="1" fill="#5a9a68"/><rect x="0" y="0" width="16" height="1.6" fill="#b0dcb8"/><rect x="1" y="2.2" width="14" height="3.4" fill="#3c7048"/><rect x="1.6" y="2.8" width="1.7" height="2.2" fill="#e0f8e4"/><rect x="4.4" y="2.8" width="1.7" height="2.2" fill="#e0f8e4"/><rect x="7" y="3.3" width="7.5" height="1.2" fill="#80b890"/><rect x="0" y="6.3" width="16" height="1" fill="#7ab888"/><rect x="0" y="9" width="16" height="1.5" fill="#2e5a38"/></svg>
<svg style="position:absolute;left:175px;top:581.46px;" width="16" height="11" viewBox="0 0 16 11"><rect x="0" y="0" width="16" height="10.5" rx="1" fill="#5a9a68"/><rect x="0" y="0" width="16" height="1.6" fill="#b0dcb8"/><rect x="1" y="2.2" width="14" height="3.4" fill="#3c7048"/><rect x="1.6" y="2.8" width="1.7" height="2.2" fill="#e0f8e4"/><rect x="4.4" y="2.8" width="1.7" height="2.2" fill="#e0f8e4"/><rect x="7" y="3.3" width="7.5" height="1.2" fill="#80b890"/><rect x="0" y="6.3" width="16" height="1" fill="#7ab888"/><rect x="0" y="9" width="16" height="1.5" fill="#2e5a38"/></svg>
<svg style="position:absolute;left:175px;top:604.0999999999999px;" width="16" height="11" viewBox="0 0 16 11"><rect x="0" y="0" width="16" height="10.5" rx="1" fill="#5a9a68"/><rect x="0" y="0" width="16" height="1.6" fill="#b0dcb8"/><rect x="1" y="2.2" width="14" height="3.4" fill="#3c7048"/><rect x="1.6" y="2.8" width="1.7" height="2.2" fill="#e0f8e4"/><rect x="4.4" y="2.8" width="1.7" height="2.2" fill="#e0f8e4"/><rect x="7" y="3.3" width="7.5" height="1.2" fill="#80b890"/><rect x="0" y="6.3" width="16" height="1" fill="#7ab888"/><rect x="0" y="9" width="16" height="1.5" fill="#2e5a38"/></svg>
<svg style="position:absolute;left:175px;top:626.74px;" width="16" height="11" viewBox="0 0 16 11"><rect x="0" y="0" width="16" height="10.5" rx="1" fill="#5a9a68"/><rect x="0" y="0" width="16" height="1.6" fill="#b0dcb8"/><rect x="1" y="2.2" width="14" height="3.4" fill="#3c7048"/><rect x="1.6" y="2.8" width="1.7" height="2.2" fill="#e0f8e4"/><rect x="4.4" y="2.8" width="1.7" height="2.2" fill="#e0f8e4"/><rect x="7" y="3.3" width="7.5" height="1.2" fill="#80b890"/><rect x="0" y="6.3" width="16" height="1" fill="#7ab888"/><rect x="0" y="9" width="16" height="1.5" fill="#2e5a38"/></svg>
<svg style="position:absolute;left:344px;top:240px;" width="16" height="11" viewBox="0 0 16 11"><rect x="0" y="0" width="16" height="10.5" rx="1" fill="#5a9a68"/><rect x="0" y="0" width="16" height="1.6" fill="#b0dcb8"/><rect x="1" y="2.2" width="14" height="3.4" fill="#3c7048"/><rect x="1.6" y="2.8" width="1.7" height="2.2" fill="#e0f8e4"/><rect x="4.4" y="2.8" width="1.7" height="2.2" fill="#e0f8e4"/><rect x="7" y="3.3" width="7.5" height="1.2" fill="#80b890"/><rect x="0" y="6.3" width="16" height="1" fill="#7ab888"/><rect x="0" y="9" width="16" height="1.5" fill="#2e5a38"/></svg>
<svg style="position:absolute;left:11px;top:262.2px;" width="20" height="17" viewBox="0 0 20 17"><path d="M5 2.5 L15 12.5 M15 2.5 L5 12.5" stroke="#c8c8c8" stroke-width="1.1"/></svg>
<svg style="position:absolute;left:11px;top:284.84px;" width="20" height="17" viewBox="0 0 20 17"><path d="M10 0.8 L12.2 6.3 L17.8 6.6 L13.5 10.2 L14.9 15.8 L10 12.6 L5.1 15.8 L6.5 10.2 L2.2 6.6 L7.8 6.3 Z" fill="none" stroke="#bdbdbd" stroke-width="1.1" stroke-linejoin="round"/></svg>
<svg style="position:absolute;left:11px;top:307.48px;" width="20" height="17" viewBox="0 0 20 17"><path d="M4.5 4 H6.5 V13 H10 V4 H13 V13 H16" fill="none" stroke="#c4803a" stroke-width="1.6"/></svg>
<svg style="position:absolute;left:11px;top:330.12px;" width="20" height="17" viewBox="0 0 20 17"><path d="M3.5 13.5 Q9 7.5 16 6.5" fill="none" stroke="#c8b83a" stroke-width="1.4" stroke-linecap="round"/><path d="M11 7.8 L16.5 3" stroke="#8a7e30" stroke-width="0.9"/></svg>
<svg style="position:absolute;left:11px;top:352.76px;" width="20" height="17" viewBox="0 0 20 17"><path d="M2 7.7 Q5 7.7 7 4.4 Q8.6 7.4 10.2 11.6 Q11.8 7.4 13.4 4.4 Q15.4 7.7 18 7.7" fill="none" stroke="#bcae48" stroke-width="1.4" stroke-linejoin="round"/></svg>
<svg style="position:absolute;left:11px;top:375.4px;" width="20" height="17" viewBox="0 0 20 17"><path d="M2.5 9 C2.8 2.5 5.2 2.5 5.6 8.5 C6 14 8.5 14 8.8 8.5 C9.1 2.5 11.6 2.5 11.9 8.5 C12.2 14 14.7 14 15 8.5 C15.3 3 17.3 3 17.5 7" fill="none" stroke="#3080c0" stroke-width="1.3"/></svg>
<svg style="position:absolute;left:11px;top:398.03999999999996px;" width="20" height="17" viewBox="0 0 20 17"><circle cx="10" cy="8.5" r="6.3" fill="none" stroke="#40c040" stroke-width="1.4"/><path d="M12 3.6 A5.5 5.5 0 0 0 12 13.4" fill="none" stroke="#2a8a2a" stroke-width="1.1"/></svg>
<svg style="position:absolute;left:11px;top:420.68px;" width="20" height="17" viewBox="0 0 20 17"><path d="M10 2 L16 5 V12 L10 15 L4 12 V5 Z M4 5 L10 8 L16 5 M10 8 V15" fill="none" stroke="#a85a2c" stroke-width="1.3" stroke-linejoin="round"/></svg>
<svg style="position:absolute;left:11px;top:443.32px;" width="20" height="17" viewBox="0 0 20 17"><path d="M4.5 2.5 H15.5 V15 H4.5 Z" fill="#8c3ccc"/><g fill="#0e0e0e"><rect x="6.8" y="2.5" width="1.4" height="7"/><rect x="9.3" y="2.5" width="1.4" height="7"/><rect x="11.8" y="2.5" width="1.4" height="7"/><rect x="8.7" y="9.5" width="0.6" height="5.5"/><rect x="11.5" y="9.5" width="0.6" height="5.5"/></g></svg>
<svg style="position:absolute;left:11px;top:465.96px;" width="20" height="17" viewBox="0 0 20 17"><path d="M3.5 3.5 H10 L16 14.5 M3.5 3.5 L9 14.5 M6.5 3.5 L12.5 14.5" fill="none" stroke="#7a50a8" stroke-width="1.2"/></svg>
<svg style="position:absolute;left:11px;top:488.6px;" width="20" height="17" viewBox="0 0 20 17"><path d="M6 2.5 H14 L13.2 15 H6.8 Z" fill="none" stroke="#8c3ccc" stroke-width="1.6" stroke-linejoin="round"/></svg>
<svg style="position:absolute;left:11px;top:511.24px;" width="20" height="17" viewBox="0 0 20 17"><path d="M2.5 9 H6.5 L8.5 3.5 L11 14.5 L13 8.5 H17.5" fill="none" stroke="#c8305f" stroke-width="1.4" stroke-linejoin="round"/></svg>
<svg style="position:absolute;left:11px;top:533.88px;" width="20" height="17" viewBox="0 0 20 17"><g stroke="#3aa08f" stroke-width="1.6"><path d="M4 15 V12.5"/><path d="M7 15 V10.5"/><path d="M10 15 V8"/><path d="M13 15 V5"/><path d="M16 15 V2.5"/></g></svg>
<svg style="position:absolute;left:11px;top:556.52px;" width="20" height="17" viewBox="0 0 20 17"><path d="M4 10 L10 4" stroke="#5cc8c0" stroke-width="1.5"/><path d="M12 2 L7.5 3.2 L10.8 6.5 Z" fill="#5cc8c0"/><path d="M16 7.5 L10 13.5" stroke="#5cc8c0" stroke-width="1.5"/><path d="M8 15.5 L12.5 14.3 L9.2 11 Z" fill="#5cc8c0"/></svg>
<svg style="position:absolute;left:11px;top:579.1600000000001px;" width="20" height="17" viewBox="0 0 20 17"><g fill="none" stroke="#9a9a9a" stroke-width="1.2"><circle cx="6.5" cy="8.5" r="3"/><circle cx="13.5" cy="8.5" r="3"/><path d="M6.5 11.5 H13.5"/></g></svg>
<svg style="position:absolute;left:153px;top:399px;" width="11" height="14" viewBox="0 0 11 14"><path d="M3 1.5 L8.5 7 L3 12.5" fill="none" stroke="#e8e8e8" stroke-width="1.5"/></svg>
<svg style="position:absolute;left:1247px;top:266px;" width="10" height="16" viewBox="0 0 10 16"><path d="M2.5 5.3 L5 2.8 L7.5 5.3" fill="none" stroke="#2a9e2a" stroke-width="1.6"/><path d="M2.5 10.2 L5 12.7 L7.5 10.2" fill="none" stroke="#2a9e2a" stroke-width="1.6"/></svg>
<svg style="position:absolute;left:1247px;top:301px;" width="10" height="16" viewBox="0 0 10 16"><path d="M2.5 5.3 L5 2.8 L7.5 5.3" fill="none" stroke="#2a9e2a" stroke-width="1.6"/><path d="M2.5 10.2 L5 12.7 L7.5 10.2" fill="none" stroke="#2a9e2a" stroke-width="1.6"/></svg>
<svg style="position:absolute;left:1247px;top:336px;" width="10" height="16" viewBox="0 0 10 16"><path d="M2.5 5.3 L5 2.8 L7.5 5.3" fill="none" stroke="#2a9e2a" stroke-width="1.6"/><path d="M2.5 10.2 L5 12.7 L7.5 10.2" fill="none" stroke="#2a9e2a" stroke-width="1.6"/></svg>
<svg style="position:absolute;left:1247px;top:371px;" width="10" height="16" viewBox="0 0 10 16"><path d="M2.5 5.3 L5 2.8 L7.5 5.3" fill="none" stroke="#2a9e2a" stroke-width="1.6"/><path d="M2.5 10.2 L5 12.7 L7.5 10.2" fill="none" stroke="#2a9e2a" stroke-width="1.6"/></svg>
<svg style="position:absolute;left:1247px;top:406px;" width="10" height="16" viewBox="0 0 10 16"><path d="M2.5 5.3 L5 2.8 L7.5 5.3" fill="none" stroke="#2a9e2a" stroke-width="1.6"/><path d="M2.5 10.2 L5 12.7 L7.5 10.2" fill="none" stroke="#2a9e2a" stroke-width="1.6"/></svg>
<svg style="position:absolute;left:1247px;top:441px;" width="10" height="16" viewBox="0 0 10 16"><path d="M2.5 5.3 L5 2.8 L7.5 5.3" fill="none" stroke="#2a9e2a" stroke-width="1.6"/><path d="M2.5 10.2 L5 12.7 L7.5 10.2" fill="none" stroke="#2a9e2a" stroke-width="1.6"/></svg>
<svg style="position:absolute;left:1237px;top:270px;" width="9" height="8" viewBox="0 0 9 8"><path d="M1.5 2.5 L4.5 5.5 L7.5 2.5 Z" fill="#2fa82f"/></svg>
<svg style="position:absolute;left:1261px;top:268px;" width="19" height="19" viewBox="0 0 19 19"><circle cx="9.5" cy="9.2" r="7.4" fill="#3a3a3a" stroke="#f0f0f0" stroke-width="1.7"/><path d="M9.5 4.8 V9.6 H5.8" fill="none" stroke="#f0f0f0" stroke-width="1.5"/></svg>
</body></html>
